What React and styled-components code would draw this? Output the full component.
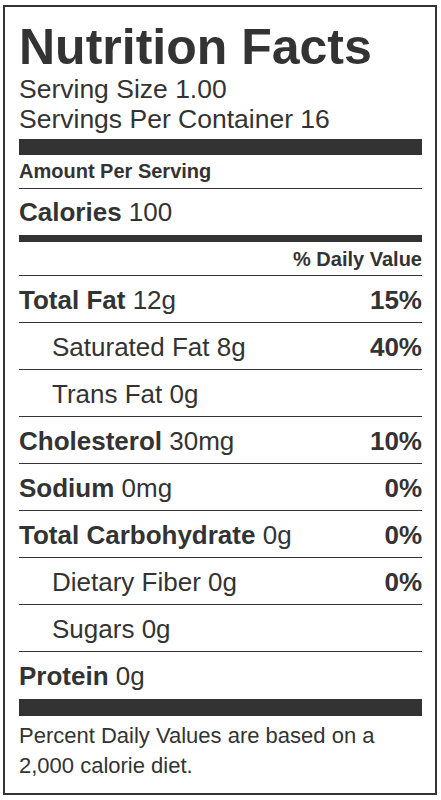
import styled, { createGlobalStyle } from "styled-components";

const GlobalStyle = createGlobalStyle`
  body {
    margin: 0;
    background: #ffffff;
    font-family: "Liberation Sans", Arial, sans-serif;
    color: #333333;
  }
`;

const Label = styled.section`
  box-sizing: border-box;
  width: 434px;
  height: 790px;
  margin: 5px 0 0 3px;
  padding: 15px 13px 0 14px;
  border: 2px solid #333333;
  background: #ffffff;
`;

const Title = styled.h1`
  margin: 0;
  font-size: 50px;
  line-height: 50px;
  font-weight: 700;
`;

const Serving = styled.div`
  margin-top: ${(p) => (p.$first ? 2 : 0)}px;
  font-size: 26.5px;
  line-height: 30px;
`;

const Bar = styled.div`
  height: ${(p) => p.$h}px;
  margin-top: ${(p) => p.$mt || 0}px;
  background: #333333;
`;

const SmallHead = styled.div`
  display: flex;
  justify-content: ${(p) => (p.$right ? "flex-end" : "flex-start")};
  padding: ${(p) => (p.$right ? "5px 0 4px" : "4px 0 5px")};
  border-bottom: 1px solid #333333;
  font-size: 20px;
  line-height: 24px;
  font-weight: 700;
`;

const Calories = styled.div`
  padding: 8px 0;
  font-size: 26px;
  line-height: 30px;
`;

const Row = styled.div`
  display: flex;
  justify-content: space-between;
  padding: 9px 0 ${(p) => (p.$last ? 8 : 7)}px ${(p) => (p.$sub ? 33 : 0)}px;
  border-bottom: ${(p) => (p.$last ? "none" : "1px solid #333333")};
  font-size: 26px;
  line-height: 30px;
`;

const Strong = styled.b`
  font-weight: 700;
`;

const Footer = styled.p`
  margin: 0;
  padding-top: 5px;
  font-size: 22px;
  line-height: 30px;
`;

const rows = [
  { name: "Total Fat", amount: "12g", dv: "15%" },
  { name: "Saturated Fat", amount: "8g", dv: "40%", sub: true },
  { name: "Trans Fat", amount: "0g", sub: true },
  { name: "Cholesterol", amount: "30mg", dv: "10%" },
  { name: "Sodium", amount: "0mg", dv: "0%" },
  { name: "Total Carbohydrate", amount: "0g", dv: "0%" },
  { name: "Dietary Fiber", amount: "0g", dv: "0%", sub: true },
  { name: "Sugars", amount: "0g", sub: true },
  { name: "Protein", amount: "0g" },
];

const App = () => {
  return (
    <>
      <GlobalStyle />
      <Label>
        <Title>Nutrition Facts</Title>
        <Serving $first>Serving Size 1.00</Serving>
        <Serving>Servings Per Container 16</Serving>
        <Bar $h={16} $mt={5} />
        <SmallHead>Amount Per Serving</SmallHead>
        <Calories>
          <Strong>Calories</Strong> 100
        </Calories>
        <Bar $h={7} />
        <SmallHead $right>% Daily Value</SmallHead>
        {rows.map((r, i) => (
          <Row key={r.name} $sub={r.sub} $last={i === rows.length - 1}>
            <span>
              {r.sub ? r.name : <Strong>{r.name}</Strong>} {r.amount}
            </span>
            {r.dv && <Strong>{r.dv}</Strong>}
          </Row>
        ))}
        <Bar $h={17} />
        <Footer>
          Percent Daily Values are based on a
          <br />
          2,000 calorie diet.
        </Footer>
      </Label>
    </>
  );
};

export default App;
